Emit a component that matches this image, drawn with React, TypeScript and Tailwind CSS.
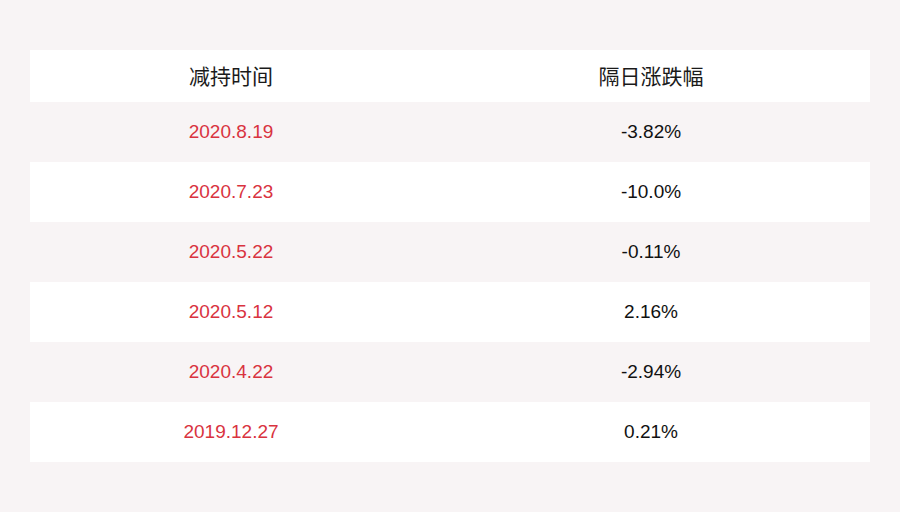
import React from "react";

const rows = [
  ["2020.8.19", "-3.82%"],
  ["2020.7.23", "-10.0%"],
  ["2020.5.22", "-0.11%"],
  ["2020.5.12", "2.16%"],
  ["2020.4.22", "-2.94%"],
  ["2019.12.27", "0.21%"],
];

export default function App() {
  return (
    <div className="w-[900px] h-[512px] bg-[#f8f4f5] pt-[50px] px-[30px]" style={{ fontFamily: '"Liberation Sans", Arial, "Noto Sans CJK SC", sans-serif' }}>
      <div className="flex flex-col">
        <div className="flex h-[52px] bg-white items-center text-[21px] text-[#1a1a1a]" style={{ fontFamily: '"Noto Sans CJK SC", sans-serif' }}>
          <div className="w-[402px] text-center">减持时间</div>
          <div className="flex-1 text-center">隔日涨跌幅</div>
        </div>
        {rows.map(([d, v], i) => (
          <div key={i} className={`flex h-[60px] items-center text-[19px] ${i % 2 === 1 ? "bg-white" : "bg-[#f8f4f5]"}`}>
            <div className="w-[402px] text-center text-[#d9333f]">{d}</div>
            <div className="flex-1 text-center text-[#111111]">{v}</div>
          </div>
        ))}
      </div>
    </div>
  );
}
